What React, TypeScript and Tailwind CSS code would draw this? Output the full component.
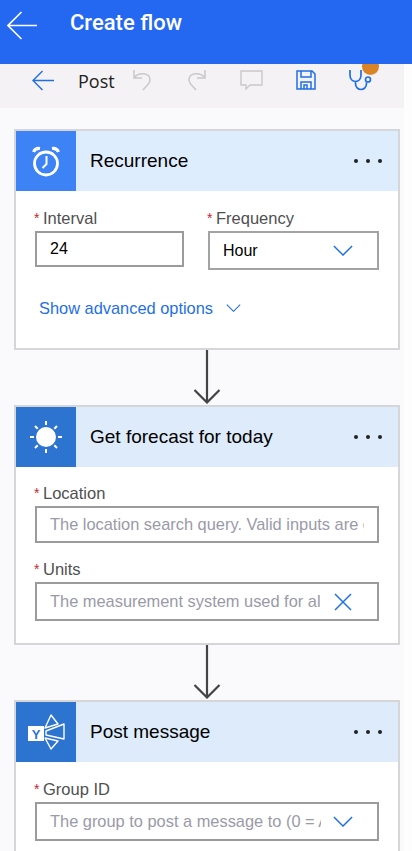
const BLUE = '#1f6fe5'

function Chevron({ className }: { className: string }) {
  return (
    <svg className={className} viewBox="0 0 22 12" fill="none" stroke={BLUE} strokeWidth="1.6" aria-hidden>
      <path d="M1 1l10 10L21 1" />
    </svg>
  )
}

function ClockIcon() {
  return (
    <svg width="32" height="32" viewBox="0 0 32 32" fill="none" stroke="#fff" aria-hidden>
      <circle cx="16" cy="18.500" r="11.500" strokeWidth="2.800" />
      <path d="M16.500 11v8l-4 4" strokeWidth="2" />
      <path d="M3.500 7c1-2.500 3.500-4 6.500-3.500" strokeWidth="3" />
      <path d="M28.500 7c-1-2.500-3.500-4-6.500-3.500" strokeWidth="3" />
    </svg>
  )
}

function SunIcon() {
  return (
    <svg width="34" height="34" viewBox="0 0 34 34" fill="none" stroke="#fff" strokeWidth="2" aria-hidden>
      <circle cx="17" cy="17" r="10" fill="#fff" stroke="none" />
      <path d="M17 1v4M17 29v4M1 17h4M29 17h4M6 6l2.700 2.700M25.300 25.300L28 28M28 6l-2.700 2.700M8.700 25.300L6 28" />
    </svg>
  )
}

function YammerIcon() {
  return (
    <svg width="37" height="36" viewBox="0 0 37 36" fill="none" aria-hidden>
      <rect x="0" y="12" width="16" height="15" fill="#fff" />
      <text x="8" y="24.500" textAnchor="middle" fontSize="13" fontWeight="700" fill="#2d74d0" fontFamily="'Liberation Sans', sans-serif">Y</text>
      <g stroke="#fff" strokeWidth="1.400" strokeLinejoin="round">
        <path d="M17 14L23 1l7 9z" />
        <path d="M18 17l18-7v15l-18-4z" />
        <path d="M17 24l13 3-7 8z" />
      </g>
    </svg>
  )
}

function Header({ bg, iconBg, icon, title }: { bg: string; iconBg: string; icon: React.ReactNode; title: string }) {
  return (
    <div className={`flex h-[60px] items-center ${bg}`}>
      <div className={`flex h-full w-[60px] items-center justify-center ${iconBg}`}>{icon}</div>
      <span className="ml-[14px] flex-1 text-[19px] text-black">{title}</span>
      <span className="mr-[16px] flex gap-[8px]">
        <i className="size-[4px] rounded-full bg-[#222]" />
        <i className="size-[4px] rounded-full bg-[#222]" />
        <i className="size-[4px] rounded-full bg-[#222]" />
      </span>
    </div>
  )
}

function Label({ text }: { text: string }) {
  return (
    <div className="-ml-px flex h-[20px] items-center text-[16.5px] leading-[20px] text-[#505050]">
      <span className="mr-[2px] w-[7px] text-[14px] text-[#c4262e]">*</span>
      {text}
    </div>
  )
}

function Arrow({ h }: { h: number }) {
  return (
    <div className="ml-[14px] flex w-[386px] justify-center">
      <svg width="28" height={h} viewBox={`0 0 28 ${h}`} fill="none" stroke="#444" strokeWidth="2.200" aria-hidden>
        <path d={`M14 0v${h - 1}M1.500 ${h - 14}L14 ${h - 1.500}L26.500 ${h - 14}`} />
      </svg>
    </div>
  )
}

function Placeholder({ text, width }: { text: string; width: string }) {
  return <span className={`ml-[13px] overflow-hidden whitespace-nowrap text-[16.4px] text-[#9a9aa8] ${width}`}>{text}</span>
}

export default function App() {
  return (
    <div className="h-[851px] w-[412px] overflow-hidden bg-[#fefdfe] font-['Liberation_Sans',sans-serif]">
      <div className="flex h-[64px] items-start bg-[#2468f2]">
        <svg className="ml-[7px] mt-[11px]" width="30" height="29" viewBox="0 0 30 29" fill="none" stroke="#fff" strokeWidth="1.600" aria-hidden>
          <path d="M30 14.500H1M14.500 1L1 14.500 14.500 28" />
        </svg>
        <span className="ml-[33px] mt-[9px] font-['Roboto',sans-serif] text-[22px] font-medium leading-[28px] text-white">Create flow</span>
      </div>

      <div className="h-[787px] w-[404px] bg-[#faf9fb]">
        <div className="relative flex h-[44px] items-center overflow-hidden bg-[#f4f2f5] pb-[12px]">
          <svg className="ml-[32px]" width="23" height="21" viewBox="0 0 23 21" fill="none" stroke={BLUE} strokeWidth="1.400" aria-hidden>
            <path d="M22 10.500H1M10.500 1L1 10.500 10.500 20" />
          </svg>
          <span className="ml-[23px] mt-[2px] w-[55px] font-['Open_Sans',sans-serif] text-[18px] text-[#222]">Post</span>
          <svg width="18" height="22" viewBox="0 0 18 22" fill="none" stroke="#c9c8ca" strokeWidth="1.500" aria-hidden>
            <path d="M1 1v8h8M1 9C5 3 17 3 17 11c0 4-4 6-7 10" />
          </svg>
          <svg className="ml-[37px]" width="18" height="22" viewBox="0 0 18 22" fill="none" stroke="#c9c8ca" strokeWidth="1.500" aria-hidden>
            <path d="M17 1v8H9M17 9C13 3 1 3 1 11c0 4 4 6 7 10" />
          </svg>
          <svg className="ml-[34px]" width="23" height="20" viewBox="0 0 23 20" fill="none" stroke="#c9c8ca" strokeWidth="1.400" aria-hidden>
            <path d="M1 1h21v14H10l-4 4v-4H1z" />
          </svg>
          <svg className="ml-[33px]" width="20" height="20" viewBox="0 0 20 20" fill="none" stroke={BLUE} strokeWidth="1.500" aria-hidden>
            <path d="M1 1h15l3 3v15H1zM5 1v6h10V1M5 19v-7h10v7M8 19v-4h3v4" />
          </svg>
          <svg className="ml-[33px]" width="23" height="22" viewBox="0 0 23 22" fill="none" stroke={BLUE} strokeWidth="1.700" aria-hidden>
            <path d="M1 1v5c0 4 2.500 6.500 5.500 6.500S12 10 12 6V1M6.500 12.500v2c0 3.500 2.500 6 5.500 6s5.500-2.500 5.500-6v-1" />
            <circle cx="19" cy="10.500" r="2.500" />
          </svg>
          <span className="absolute left-[362px] top-[-6px] size-[17px] rounded-full bg-[#d98527]" />
        </div>

        <div className="ml-[14px] mt-[21px] w-[386px] border-2 border-[#d6d5d7] bg-white">
          <Header bg="bg-[#deedfe]" iconBg="bg-[#3d83f5]" icon={<ClockIcon />} title="Recurrence" />
          <div className="h-[157px] px-[19px] pt-[17px]">
            <div className="flex items-start">
              <div className="mr-[24px] w-[149px]">
                <Label text="Interval" />
                <div className="mt-[3px] flex h-[36px] items-center border-2 border-[#9b9b9b] pl-[13px] text-[16px] text-black">24</div>
              </div>
              <div className="w-[171px]">
                <Label text="Frequency" />
                <div className="mt-[3px] flex h-[39px] items-center justify-between border-2 border-[#a3a3a3] pl-[13px] pr-[24px] text-[16px] text-black">
                  Hour
                  <Chevron className="h-[11px] w-[20px]" />
                </div>
              </div>
            </div>
            <div className="mt-[26px] flex items-center pl-[4px] text-[16.4px] text-[#1f6fe5]">
              Show advanced options
              <Chevron className="ml-[13px] h-[8px] w-[15px]" />
            </div>
          </div>
        </div>

        <Arrow h={54} />

        <div className="ml-[14px] mt-[1px] w-[386px] border-2 border-[#d6d5d7] bg-white">
          <Header bg="bg-[#ddebfb]" iconBg="bg-[#2d74d0]" icon={<SunIcon />} title="Get forecast for today" />
          <div className="h-[176px] px-[19px] pt-[16px]">
            <Label text="Location" />
            <div className="mt-[3px] flex h-[37px] w-[344px] items-center border-2 border-[#9b9b9b]">
              <Placeholder text="The location search query. Valid inputs are city, region" width="w-[314px]" />
            </div>
            <div className="mt-[16px]">
              <Label text="Units" />
            </div>
            <div className="mt-[3px] flex h-[39px] w-[344px] items-center border-2 border-[#9b9b9b]">
              <Placeholder text="The measurement system used for all" width="w-[270px]" />
              <svg className="ml-[14px]" width="18" height="18" viewBox="0 0 18 18" fill="none" stroke={BLUE} strokeWidth="1.500" aria-hidden>
                <path d="M1 1l16 16M17 1L1 17" />
              </svg>
            </div>
          </div>
        </div>

        <Arrow h={54} />

        <div className="ml-[14px] mt-[1px] w-[386px] border-2 border-[#d6d5d7] bg-white">
          <Header bg="bg-[#ddebfb]" iconBg="bg-[#2d74d0]" icon={<YammerIcon />} title="Post message" />
          <div className="h-[100px] px-[19px] pt-[17px]">
            <Label text="Group ID" />
            <div className="mt-[3px] flex h-[39px] w-[344px] items-center border-2 border-[#9b9b9b]">
              <Placeholder text="The group to post a message to (0 = All)" width="w-[271px]" />
              <Chevron className="ml-[12px] h-[11px] w-[20px]" />
            </div>
          </div>
        </div>
      </div>
    </div>
  )
}
